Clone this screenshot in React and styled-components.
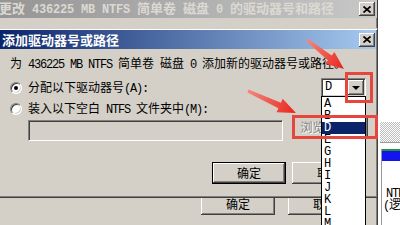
import React from 'react';
import styled, { createGlobalStyle } from 'styled-components';

const GlobalStyle = createGlobalStyle`
  html, body {
    margin: 0;
    padding: 0;
    background: #fff;
    overflow: hidden;
  }
`;

const Desktop = styled.div`
  position: relative;
  display: flex;
  width: 400px;
  height: 225px;
  overflow: hidden;
  font-family: "Noto Sans CJK SC", "Liberation Sans", sans-serif;
  font-size: 12px;
  color: #000;
`;

const Window = styled.div`
  flex: none;
  width: 378px;
  box-sizing: border-box;
  display: flex;
  flex-direction: column;
  background: #d4d0c8;
  border-right: 1px solid #404040;
  box-shadow: inset -1px 0 #808080;
`;

const TitleBar = styled.div`
  flex: none;
  display: flex;
  align-items: center;
  height: ${p => (p.$active ? 19 : 18)}px;
  padding-left: ${p => (p.$active ? 2 : 0)}px;
  background: ${p =>
    p.$active
      ? 'linear-gradient(to right, #0a246a, #a6caf0)'
      : 'linear-gradient(to right, #959595, #c8c8c8)'};
  color: ${p => (p.$active ? '#fff' : '#dcd9d2')};
  font-size: 13px;
  font-weight: bold;
  line-height: 13px;
  white-space: nowrap;
  overflow: hidden;
`;

const TitleText = styled.span`
  margin-left: ${p => p.$shift || 0}px;
`;

const TitleLatin = styled.span`
  font-family: "Liberation Mono", monospace;
  font-size: 12px;
  letter-spacing: -0.2px;
  white-space: pre;
`;

const Latin = styled.span`
  font-family: "Liberation Mono", monospace;
  font-size: 12px;
  letter-spacing: -1.2px;
  white-space: pre;
`;

const CloseButton = styled.div`
  flex: none;
  display: flex;
  align-items: center;
  justify-content: center;
  width: 16px;
  height: 14px;
  margin-left: auto;
  margin-right: ${p => p.$gap}px;
  box-sizing: border-box;
  background: #d4d0c8;
  box-shadow: inset -1px -1px #404040, inset 1px 1px #fff, inset -2px -2px #808080;
`;

const OuterBody = styled.div`
  flex: 1;
  display: flex;
  flex-direction: column;
  justify-content: flex-end;
  padding: 0 15px 10px 0;
`;

const ButtonRow = styled.div`
  display: flex;
  justify-content: flex-end;
  gap: ${p => p.$gap}px;
  margin-top: ${p => p.$top || 0}px;
`;

const Button = styled.button`
  flex: none;
  box-sizing: border-box;
  width: ${p => p.$w || 74}px;
  height: ${p => p.$h || 22}px;
  padding: 0;
  font: inherit;
  font-size: 12px;
  line-height: 12px;
  white-space: nowrap;
  color: ${p => (p.disabled ? '#808080' : '#000')};
  text-shadow: ${p => (p.disabled ? '1px 1px #fff' : 'none')};
  background: #d4d0c8;
  border: ${p => (p.$default ? '1px solid #000' : 'none')};
  box-shadow: inset -1px -1px #404040, inset 1px 1px #fff, inset -2px -2px #808080;
`;

const Dialog = styled.div`
  position: absolute;
  top: 28px;
  left: -2px;
  width: 380px;
  height: 170px;
  box-sizing: border-box;
  display: flex;
  flex-direction: column;
  padding: 1px;
  background: #d4d0c8;
  border: 1px solid;
  border-color: #d4d0c8 #404040 #404040 #d4d0c8;
  box-shadow: inset 1px 1px #fff, inset -1px -1px #808080;
  z-index: 2;
`;

const DialogBody = styled.div`
  display: flex;
  flex-direction: column;
  padding: 8px 10px 0 10px;
`;

const Prompt = styled.div`
  line-height: 12px;
  height: 12px;
  white-space: nowrap;
`;

const OptionRow = styled.div`
  display: flex;
  align-items: center;
  height: ${p => p.$h}px;
  margin-top: ${p => p.$top}px;
  white-space: nowrap;
`;

const Radio = styled.span`
  position: relative;
  flex: none;
  width: 12px;
  height: 12px;
  box-sizing: border-box;
  border-radius: 50%;
  background: #fff;
  border: 1px solid;
  border-color: #808080 #fff #fff #808080;
  box-shadow: inset 1px 1px #404040, inset -1px -1px #d4d0c8;

  &::after {
    content: '';
    display: ${p => (p.$checked ? 'block' : 'none')};
    position: absolute;
    left: 3px;
    top: 3px;
    width: 4px;
    height: 4px;
    border-radius: 50%;
    background: #000;
  }
`;

const Label = styled.span`
  margin-left: 6px;
  line-height: 12px;
`;

const Combo = styled.div`
  position: relative;
  flex: none;
  display: flex;
  align-items: stretch;
  margin-left: auto;
  width: 45px;
  height: 19px;
  box-sizing: border-box;
  background: #fff;
  border: 1px solid;
  border-color: #808080 #fff #fff #808080;
  box-shadow: inset 1px 1px #404040, inset -1px -1px #d4d0c8;
  padding: 1px;
`;

const ComboValue = styled.span`
  flex: 1;
  padding-left: 2px;
  font-family: "Liberation Mono", monospace;
  font-size: 12px;
  line-height: 15px;
`;

const ComboButton = styled.span`
  flex: none;
  display: flex;
  align-items: center;
  justify-content: center;
  width: 16px;
  background: #d4d0c8;
  box-shadow: inset -1px -1px #404040, inset 1px 1px #fff, inset -2px -2px #808080;

  &::before {
    content: '';
    width: 0;
    height: 0;
    border-left: 4px solid transparent;
    border-right: 4px solid transparent;
    border-top: 4px solid #000;
  }
`;

const DropList = styled.ul`
  position: absolute;
  top: 100%;
  left: -1px;
  width: 45px;
  box-sizing: border-box;
  margin: 0;
  padding: 1px 0 0;
  list-style: none;
  background: #fff;
  border: 1px solid #000;
  z-index: 3;
`;

const DropItem = styled.li`
  height: 12px;
  padding-left: 2px;
  font-family: "Liberation Mono", monospace;
  font-size: 12px;
  line-height: 12px;
  color: ${p => (p.$selected ? '#fff' : '#000')};
  background: ${p => (p.$selected ? '#0a246a' : 'transparent')};
`;

const FolderRow = styled.div`
  display: flex;
  align-items: flex-start;
  margin-top: 2px;
  padding-left: 18px;
`;

const TextField = styled.div`
  flex: none;
  width: 255px;
  height: 21px;
  box-sizing: border-box;
  background: #d4d0c8;
  border: 1px solid;
  border-color: #808080 #fff #fff #808080;
  box-shadow: inset 1px 1px #404040, inset -1px -1px #d4d0c8;
`;

const BrowseButton = styled(Button)`
  margin: -3px -2px 0 10px;
`;

const Callout = styled.div`
  position: absolute;
  left: ${p => p.$x}px;
  top: ${p => p.$y}px;
  width: ${p => p.$w}px;
  height: ${p => p.$h}px;
  box-sizing: border-box;
  border: 3px solid #e5463d;
  z-index: 5;
`;

const Arrows = styled.svg`
  position: absolute;
  left: 0;
  top: 0;
  z-index: 6;
  pointer-events: none;
`;

const DiskPane = styled.div`
  flex: 1;
  display: flex;
  flex-direction: column;
  padding-top: 122px;
  background: #fff;
  white-space: nowrap;
  overflow: hidden;
`;

const Hatch = styled.div`
  height: 20px;
  margin-left: 2px;
  background: repeating-conic-gradient(#bdbdbd 0% 25%, #fff 0% 50%) 0 0 / 2px 2px;
  border-bottom: 1px solid #9a9a9a;
`;

const DiskBlock = styled.div`
  margin: 6px 0 0 3px;
  border-left: 1px solid #9a9a9a;
  flex: 1;
`;

const Stripe = styled.div`
  height: ${p => p.$h}px;
  background: ${p => p.$color};
`;

const DiskText = styled.div`
  padding-left: ${p => p.$indent}px;
  margin-top: ${p => p.$top || 0}px;
  font-family: "Liberation Mono", "Noto Sans CJK SC", monospace;
  font-size: 12px;
  line-height: 12px;
  letter-spacing: -1.2px;
`;

const CloseGlyph = () => (
  <svg width="8" height="7" viewBox="0 0 8 7">
    <path d="M0.5 0.5 L7.5 6.5 M7.5 0.5 L0.5 6.5" stroke="#000" strokeWidth="1.7" fill="none" />
  </svg>
);

const drives = ['A', 'B', 'D', 'E', 'G', 'H', 'I', 'J', 'K', 'L', 'M'];

export default function App() {
  return (
    <>
      <GlobalStyle />
      <Desktop>
        <Window>
          <TitleBar>
            <TitleText $shift={-1}>
              更改<TitleLatin> 436225 MB NTFS </TitleLatin>简单卷<TitleLatin> </TitleLatin>磁盘
              <TitleLatin> 0 </TitleLatin>的驱动器号和路径
            </TitleText>
            <CloseButton $gap={2}>
              <CloseGlyph />
            </CloseButton>
          </TitleBar>
          <OuterBody>
            <ButtonRow $gap={13}>
              <Button>确定</Button>
              <Button>取消</Button>
            </ButtonRow>
          </OuterBody>
        </Window>

        <Dialog>
          <TitleBar $active>
            <TitleText>添加驱动器号或路径</TitleText>
            <CloseButton $gap={1}>
              <CloseGlyph />
            </CloseButton>
          </TitleBar>
          <DialogBody>
            <Prompt>
              为<Latin> 436225 MB NTFS </Latin>简单卷<Latin> </Latin>磁盘<Latin> 0 </Latin>
              添加新的驱动器号或路径。
            </Prompt>
            <OptionRow $h={19} $top={9}>
              <Radio $checked />
              <Label>
                分配以下驱动器号<Latin>(A):</Latin>
              </Label>
              <Combo>
                <ComboValue>D</ComboValue>
                <ComboButton />
                <DropList>
                  {drives.map(d => (
                    <DropItem key={d} $selected={d === 'D'}>
                      {d}
                    </DropItem>
                  ))}
                </DropList>
              </Combo>
            </OptionRow>
            <OptionRow $h={18} $top={3}>
              <Radio />
              <Label>
                装入以下空白<Latin> NTFS </Latin>文件夹中<Latin>(M):</Latin>
              </Label>
            </OptionRow>
            <FolderRow>
              <TextField />
              <BrowseButton disabled $w={75} $h={21}>
                浏览<Latin>(R)...</Latin>
              </BrowseButton>
            </FolderRow>
            <ButtonRow $gap={6} $top={21}>
              <Button $default>确定</Button>
              <Button>取消</Button>
            </ButtonRow>
          </DialogBody>
        </Dialog>

        <DiskPane>
          <Hatch />
          <DiskBlock>
            <Stripe $h={2} $color="#1c9a3a" />
            <Stripe $h={10} $color="#1414ee" />
            <DiskText $indent={4} $top={27}>NTFS</DiskText>
            <DiskText $indent={1}>(逻辑驱动器)</DiskText>
          </DiskBlock>
        </DiskPane>

        <Callout $x={345} $y={72} $w={28} $h={31} />
        <Callout $x={292} $y={115} $w={86} $h={24} />

        <Arrows width="400" height="225" viewBox="0 0 400 225">
          <defs>
            <linearGradient id="arrowA" x1="307" y1="40" x2="344" y2="69" gradientUnits="userSpaceOnUse">
              <stop offset="0" stopColor="#f4877c" />
              <stop offset="1" stopColor="#e8251c" />
            </linearGradient>
            <linearGradient id="arrowB" x1="248" y1="91" x2="296" y2="113" gradientUnits="userSpaceOnUse">
              <stop offset="0" stopColor="#f4877c" />
              <stop offset="1" stopColor="#e8251c" />
            </linearGradient>
          </defs>
          <polygon
            fill="url(#arrowA)"
            points="306.1,41.2 327.9,60.3 325.2,63.8 344,69 334.4,52 331.7,55.5 307.9,38.8"
          />
          <polygon
            fill="url(#arrowB)"
            points="247.4,92.4 278.4,108.2 276.5,112.3 296,113 282.7,98.7 280.9,102.8 248.6,89.6"
          />
        </Arrows>
      </Desktop>
    </>
  );
}
